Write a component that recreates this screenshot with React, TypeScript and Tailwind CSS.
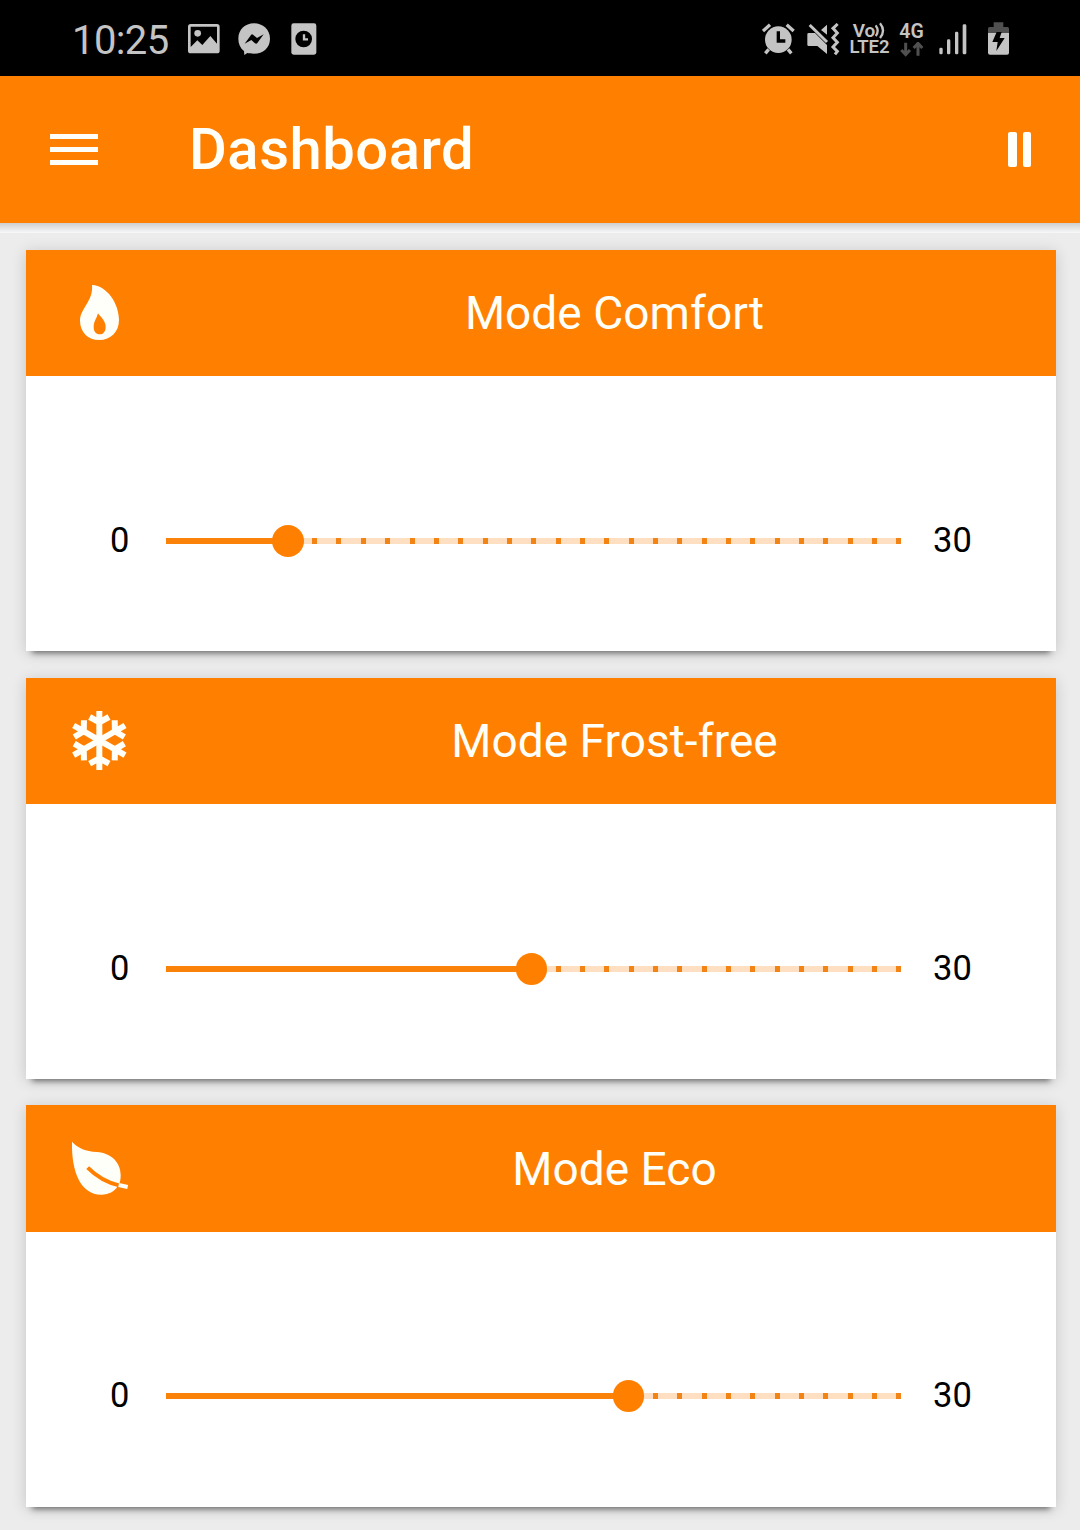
import React from "react";

type Mode = { title: string; value: number; icon: React.ReactNode; card: string; head: string; body: string };

const FlameIcon = () => (
  <svg width="42" height="58" viewBox="237 252 126 174" fill="#fffffa">
    <path
      fillRule="evenodd"
      d="M276 255C322 257 357 312 357 360C357 396 332 420 298 420C264 420 240 396 240 362C240 325 281 303 276 255ZM294 340C289 358 281 364 281 382C281 395 288 403 299 403C310 403 317 394 317 380C317 364 305 354 294 340Z"
    />
  </svg>
);

const SnowflakeIcon = () => (
  <svg width="58" height="60" viewBox="-85 -88 174 180" fill="none" stroke="#fffffa" strokeWidth="18">
    {[0, 60, 120, 180, 240, 300].map((angle) => (
      <g key={angle} transform={`rotate(${angle})`}>
        <path d="M0 0V-89M-29 -70L0 -54L29 -70" />
      </g>
    ))}
  </svg>
);

const LeafIcon = () => (
  <svg width="58" height="56" viewBox="63 76 174 168">
    <path
      fill="#fffffa"
      d="M66 78C86 99 106 106 140 109C187 112 212 144 212 178C212 195 209 204 203 212C193 228 177 237 154 237C91 237 64 166 66 78Z"
    />
    <path fill="none" stroke="#ff8000" strokeWidth="12" d="M113 156C141 184 171 201 207 209" />
    <path fill="none" stroke="#fffffa" strokeWidth="12" d="M206 208L233 214" />
  </svg>
);

const modes: Mode[] = [
  {
    title: "Mode Comfort",
    value: 5,
    icon: <FlameIcon />,
    card: "mb-[27px] h-[401px]",
    head: "h-[126px]",
    body: "mt-[162px]",
  },
  {
    title: "Mode Frost-free",
    value: 15,
    icon: <SnowflakeIcon />,
    card: "mb-[26px] h-[401px]",
    head: "h-[126px]",
    body: "mt-[162px]",
  },
  {
    title: "Mode Eco",
    value: 19,
    icon: <LeafIcon />,
    card: "h-[402px]",
    head: "h-[127px]",
    body: "mt-[161px]",
  },
];

const STEP = 24.35;
const ticks = Array.from({ length: 31 }, (_, i) => i);

function Slider({ value }: { value: number }) {
  return (
    <div className="relative h-[6px] w-[735px] bg-[#ffdfc2]">
      {ticks
        .filter((t) => t > value)
        .map((t) => (
          <span
            key={t}
            className="absolute top-0 h-[6px] w-[5px] bg-[#f28416]"
            style={{ left: Math.min(730, Math.round(t * STEP)) }}
          />
        ))}
      <div className="h-full bg-[#fb8209]" style={{ width: value * STEP }} />
      <span
        className="absolute -top-[13px] size-[31.5px] rounded-full bg-[#ff8000]"
        style={{ left: value * STEP - 15.75 }}
      />
    </div>
  );
}

function ModeCard({ mode }: { mode: Mode }) {
  return (
    <section
      className={`${mode.card} shrink-0 bg-white shadow-[0_8px_6px_-6px_rgba(0,0,0,0.5),0_2px_14px_rgba(0,0,0,0.16)]`}
    >
      <header className={`${mode.head} flex items-center bg-[#ff8000]`}>
        <div className="flex w-[147px] justify-center">{mode.icon}</div>
        <h2 className="flex-1 text-center text-[46px] leading-[54px] tracking-[0.05px] text-[#fffffa]">{mode.title}</h2>
      </header>
      <div className={`${mode.body} flex h-[6px] items-center pl-[84px] text-[34.5px] leading-[40px] text-black`}>
        <span className="w-[56px] pb-[3px]">0</span>
        <Slider value={mode.value} />
        <span className="pb-[3px] pl-[32px]">30</span>
      </div>
    </section>
  );
}

function StatusBar() {
  return (
    <div className="flex h-[76px] shrink-0 items-center bg-black pt-[2px] pr-[69px] pl-[72px] text-[#c4c4c4]">
      <span className="w-[116px] pt-[4px] text-[40px] leading-[46px] tracking-[-0.6px]">10:25</span>
      <svg width="32" height="30" viewBox="385 42 96 90" fill="currentColor">
        <path
          fillRule="evenodd"
          d="M393 42H472Q480 42 480 50V122Q480 130 472 130H393Q385 130 385 122V50Q385 42 393 42ZM393 50V111L413 91L428 105L452 78L472 101V50Z"
        />
        <circle cx="414" cy="70" r="10" />
      </svg>
      <svg className="ml-[18px]" width="32" height="32" viewBox="534 39 96 96">
        <path
          fill="currentColor"
          d="M582 40C609 40 630 59 630 86C630 113 609 131 582 131C573 131 567 130 562 129L553 135L552 123C541 114 535 102 535 86C535 59 555 40 582 40Z"
        />
        <path fill="#000" d="M554 101L573 75Q576 71 580 75L591 84L611 73L592 99Q589 103 584 99L574 90Z" />
      </svg>
      <svg className="ml-[21px]" width="26" height="32" viewBox="694 39 78 96">
        <rect x="695" y="40" width="75" height="94" rx="7" fill="currentColor" />
        <circle cx="732" cy="87" r="25" fill="#000" />
        <path d="M733 73V88H745" fill="none" stroke="currentColor" strokeWidth="7" />
      </svg>
      <div className="ml-auto flex items-center">
        <svg width="33" height="33" viewBox="35 37 99 99" fill="none" stroke="currentColor">
          <circle cx="84" cy="87" r="40" fill="currentColor" stroke="none" />
          <path strokeWidth="10" d="M38 61L59 42M109 42L130 61M55 116L45 128M113 116L123 128" />
          <path d="M84 62V91H105" stroke="#000" strokeWidth="10" />
        </svg>
        <svg className="ml-[12px]" width="33" height="33" viewBox="171 37 99 99">
          <path fill="currentColor" d="M176 67H195L231 103V130L202 106H176Q172 106 172 102V71Q172 67 176 67ZM231 42V72L213 58Z" />
          <path
            fill="none"
            stroke="currentColor"
            strokeWidth="9"
            d="M179 43L231 94M263 40L249 53L262 67L249 81L262 95L249 109L262 122L255 131"
          />
        </svg>
        <div className="ml-[8px] flex w-[44px] flex-col items-center text-[18.5px] leading-[17px] font-semibold">
          <span className="flex items-center text-[19px]">
            Vo
            <svg width="11" height="17" viewBox="0 0 33 51" fill="none" stroke="currentColor" strokeWidth="7">
              <path d="M2 10Q14 26 2 42M15 4Q33 26 15 48" />
            </svg>
          </span>
          <span>LTE2</span>
        </div>
        <div className="ml-[7px] flex w-[26px] flex-col items-center pt-[1px] text-[19.5px] leading-[18px] font-semibold">
          <span>4G</span>
          <svg className="mt-[1px]" width="24" height="15" viewBox="452 96 72 45" fill="none" stroke="#505050" strokeWidth="9">
            <path d="M469 98V133M456 120L469 134L482 120M506 137V102M493 114L506 100L519 114" />
          </svg>
        </div>
        <svg className="ml-[14px]" width="28" height="31" viewBox="566 42 84 93" fill="currentColor">
          <rect x="567" y="113" width="10" height="20" rx="4" />
          <rect x="590" y="88" width="10" height="45" rx="4" />
          <rect x="614" y="65" width="10" height="68" rx="4" />
          <rect x="637" y="43" width="11" height="90" rx="4" />
        </svg>
        <svg className="mr-[1px] ml-[20.5px]" width="23" height="34" viewBox="711 36 69 102">
          <path fill="#505050" d="M731 37H760V51H772Q777 51 777 56V70H714V56Q714 51 719 51H731Z" />
          <path fill="currentColor" d="M714 69H777V128Q777 134 771 134H720Q714 134 714 128Z" />
          <path fill="#000" d="M740 66H755L749 84H764L739 123L743 96H727Z" />
        </svg>
      </div>
    </div>
  );
}

export default function App() {
  return (
    <div className="flex h-[1532px] w-[1080px] flex-col overflow-hidden bg-[#ececec] font-[Roboto,sans-serif]">
      <StatusBar />
      <header className="flex h-[147px] shrink-0 items-center bg-[#ff8000] pr-[49px] pl-[50px]">
        <div className="flex w-12 flex-col gap-[8px]">
          <span className="h-[5px] bg-[#fffffa]" />
          <span className="h-[5px] bg-[#fffffa]" />
          <span className="h-[5px] bg-[#fffffa]" />
        </div>
        <h1 className="ml-[91px] pb-[1px] text-[58px] leading-[68px] font-medium tracking-[0.5px] text-[#fffffa]">
          Dashboard
        </h1>
        <div className="ml-auto flex gap-[6px]">
          <span className="h-[35px] w-[8.5px] rounded-[2px] bg-[#fffffa]" />
          <span className="h-[35px] w-[8.5px] rounded-[2px] bg-[#fffffa]" />
        </div>
      </header>
      <div className="h-[10px] shrink-0 bg-linear-to-b from-[#cfcfcf] to-[#f8f9fa]" />
      <main className="flex flex-1 flex-col border-b-2 border-white pt-[17px] pr-[24px] pl-[26px]">
        {modes.map((mode) => (
          <ModeCard key={mode.title} mode={mode} />
        ))}
      </main>
    </div>
  );
}
